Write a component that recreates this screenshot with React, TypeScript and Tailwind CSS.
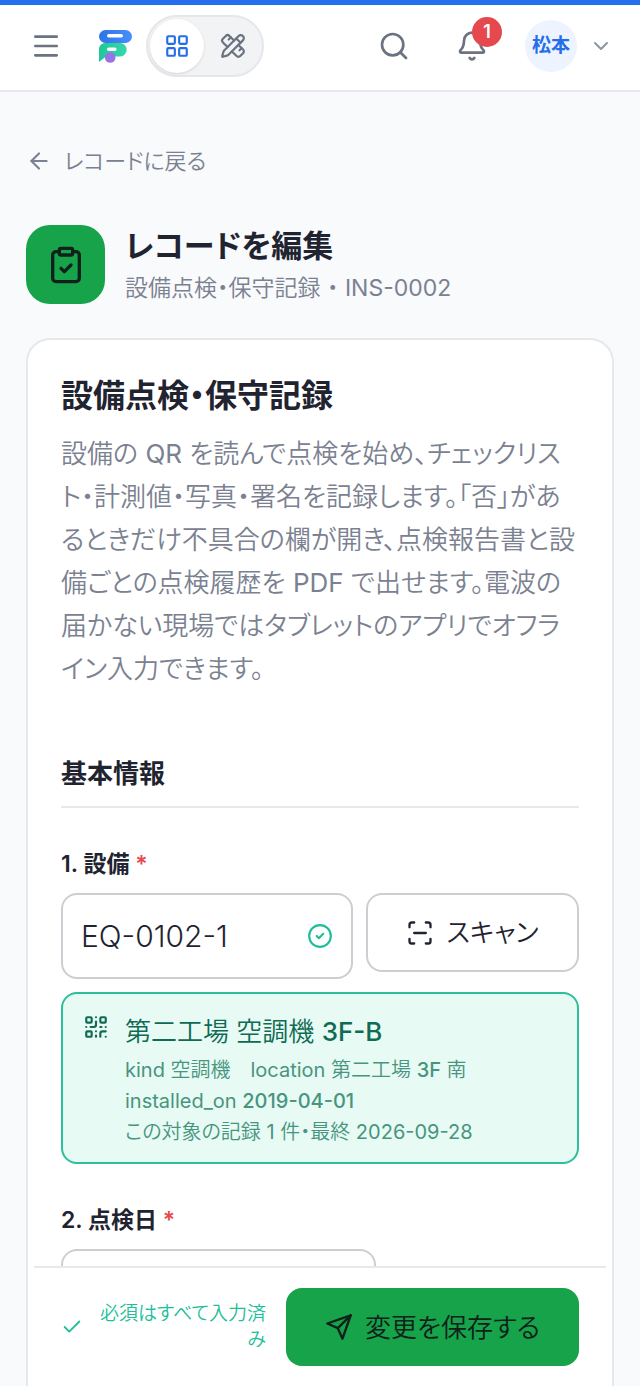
import { useState } from 'react';
import {
  ArrowLeft,
  Bell,
  Check,
  ChevronDown,
  CircleCheck,
  ClipboardCheck,
  LayoutGrid,
  Menu,
  PencilRuler,
  QrCode,
  ScanLine,
  Search,
} from 'lucide-react';

const lightText = "font-['Inter','Noto_Sans_CJK_JP_DemiLight','Noto_Sans_CJK_JP',sans-serif]";

function Logo() {
  return (
    <svg viewBox="0 0 34 34" className="w-[34px] h-[34px]" aria-hidden="true">
      <defs>
        <linearGradient id="logo-blue" x1="0" x2="1">
          <stop offset="0" stopColor="#2f73e8" />
          <stop offset="1" stopColor="#4590fa" />
        </linearGradient>
        <linearGradient id="logo-green" x1="0" x2="1">
          <stop offset="0" stopColor="#1fc898" />
          <stop offset="1" stopColor="#3ad6ac" />
        </linearGradient>
      </defs>
      <path d="M1 33V20a6 6 0 0 1 6-6h15a6.700 6.700 0 0 1 0 13.500H8z" fill="url(#logo-green)" />
      <rect x="1" y="1" width="33" height="13" rx="6.500" fill="url(#logo-blue)" />
      <rect x="9" y="5" width="16" height="3.500" rx="1.700" fill="#fff" />
      <rect x="9" y="18.500" width="9.500" height="3.500" rx="1.700" fill="#fff" />
      <circle cx="12.200" cy="28.500" r="5.300" fill="#9873ea" />
    </svg>
  );
}

function SendIcon() {
  return (
    <svg
      viewBox="0 0 24 24"
      fill="none"
      stroke="currentColor"
      strokeWidth="2"
      strokeLinecap="round"
      strokeLinejoin="round"
      className="w-7 h-7"
      aria-hidden="true"
    >
      <path d="m22 2-7 20-4-9-9-4Z" />
      <path d="M22 2 11 13" />
    </svg>
  );
}

function Header() {
  const [mode, setMode] = useState<'use' | 'design'>('use');

  return (
    <header className="flex items-center border-t-[5px] border-t-[#256eeb] border-b-2 border-b-[#e6e8eb] bg-white h-[92px] pb-[3px] pl-[30px] pr-[27px] text-[#6b7280]">
      <button type="button" aria-label="メニュー" className="shrink-0">
        <Menu className="w-8 h-8" />
      </button>
      <a href="#" aria-label="ホーム" className="ml-9 shrink-0">
        <Logo />
      </a>
      <div className="ml-[14px] flex shrink-0 items-center gap-[2px] rounded-full border-2 border-[#e5e7eb] bg-[#f1f3f5] p-[2px]">
        <button
          type="button"
          aria-label="アプリ"
          onClick={() => setMode('use')}
          className={`flex h-[54px] w-[54px] items-center justify-center rounded-full ${mode === 'use' ? 'bg-white text-[#256eeb] shadow' : ''}`}
        >
          <LayoutGrid className="w-[26px] h-[26px]" />
        </button>
        <button
          type="button"
          aria-label="デザイン"
          onClick={() => setMode('design')}
          className={`flex h-[54px] w-[54px] items-center justify-center rounded-full ${mode === 'design' ? 'bg-white text-[#256eeb] shadow' : ''}`}
        >
          <PencilRuler className="w-[26px] h-[26px]" />
        </button>
      </div>
      <div className="ml-auto flex shrink-0 items-center">
        <button type="button" aria-label="検索">
          <Search className="w-8 h-8" />
        </button>
        <button type="button" aria-label="通知" className="relative ml-[46px]">
          <Bell className="w-8 h-8" />
          <span className="absolute -top-[13px] left-4 flex h-[30px] w-[30px] items-center justify-center rounded-full bg-[#e5484d] text-lg font-semibold text-white">
            1
          </span>
        </button>
        <button type="button" aria-label="アカウント" className="ml-[37px] flex items-center gap-3">
          <span className="flex h-[52px] w-[52px] items-center justify-center rounded-full bg-[#edf4ff] text-[19px] font-semibold text-[#256eeb]">
            松本
          </span>
          <ChevronDown className="w-6 h-6 text-[#9096a0]" />
        </button>
      </div>
    </header>
  );
}

function FieldLabel({ htmlFor, children }: { htmlFor: string; children: string }) {
  return (
    <label htmlFor={htmlFor} className="block text-[23px] leading-8 font-semibold text-[#1f2430]">
      {children} <span className="text-[#e5484d]">*</span>
    </label>
  );
}

function EquipmentCard() {
  return (
    <div className={`mt-[13px] flex gap-4 rounded-2xl border-2 border-[#2bbf9b] bg-[#e7faf4] px-5 pt-5 pb-[14px] text-[#0f6b53] ${lightText}`}>
      <QrCode className="w-[26px] h-[26px] shrink-0" />
      <div>
        <p className="text-[26px] leading-9">
          第二工場 空調機 <span className="font-medium">3F-B</span>
        </p>
        <div className="mt-[5px] text-xl leading-[31px] text-[#47957f]">
          <p>
            kind 空調機　location 第二工場 <span className="font-medium">3F</span> 南
          </p>
          <p>
            installed_on <span className="font-medium">2019-04-01</span>
          </p>
          <p>この対象の記録 1 件・最終 2026-09-28</p>
        </div>
      </div>
    </div>
  );
}

export default function App() {
  const [equipment, setEquipment] = useState('EQ-0102-1');
  const [date, setDate] = useState('');

  return (
    <div className="h-screen overflow-hidden flex flex-col bg-[#f8fafc] font-['Inter','Noto_Sans_CJK_JP',sans-serif] [font-feature-settings:'palt']">
      <Header />
      <main className="flex-1 min-h-0 flex flex-col px-[26px] pt-[53px]">
        <a href="#" className={`flex items-center gap-3 self-start text-[22px] leading-8 text-[#7b8190] ${lightText}`}>
          <ArrowLeft className="w-[26px] h-[26px]" />
          レコードに戻る
        </a>

        <div className="mt-12 flex items-center gap-5">
          <div className="flex h-[79px] w-[79px] shrink-0 items-center justify-center rounded-3xl bg-[#16a34a] text-[#10201a]">
            <ClipboardCheck className="w-10 h-10" />
          </div>
          <div>
            <h1 className="text-[31px] leading-10 font-bold text-[#1f2430]">レコードを編集</h1>
            <p className={`mt-[6px] text-[23px] leading-8 text-[#7b8190] ${lightText}`}>設備点検・保守記録 ・ INS-0002</p>
          </div>
        </div>

        {/* Form card */}
        <form
          onSubmit={(e) => e.preventDefault()}
          className="mt-[34px] flex-1 min-h-0 flex flex-col rounded-t-3xl border-2 border-b-0 border-[#e6e8eb] bg-white"
        >
          <div className="flex-1 min-h-0 overflow-hidden px-[33px] pt-[33px]">
            <h2 className="text-[32px] leading-[46px] font-bold text-[#1f2430]">設備点検・保守記録</h2>
            <p className={`mt-[13px] text-[26px] leading-[43px] text-[#7b8190] ${lightText}`}>
              設備の QR を読んで点検を始め、チェックリスト・計測値・写真・署名を記録します。「否」があるときだけ不具合の欄が開き、点検報告書と設備ごとの点検履歴を PDF で出せます。電波の届かない現場ではタブレットのアプリでオフライン入力できます。
            </p>

            <h3 className="mt-[66px] border-b-2 border-[#e6e8eb] pb-[14px] text-[26px] leading-9 font-semibold text-[#1f2430]">
              基本情報
            </h3>

            <div className="mt-10">
              <FieldLabel htmlFor="equipment">1. 設備</FieldLabel>
              <div className="mt-[13px] flex items-start gap-[13px]">
                <div className="flex h-[86px] min-w-0 flex-1 items-center rounded-2xl border-2 border-[#cbced2] px-[18px]">
                  <input
                    id="equipment"
                    value={equipment}
                    onChange={(e) => setEquipment(e.target.value)}
                    className="min-w-0 flex-1 bg-transparent text-[30px] font-light text-[#1f2430] outline-none"
                  />
                  <CircleCheck className="w-[26px] h-[26px] shrink-0 text-[#20bf98]" />
                </div>
                <button
                  type="button"
                  className={`flex h-[79px] w-[213px] items-center justify-center gap-3 rounded-2xl border-2 border-[#cbced2] text-[26px] text-[#1f2430] ${lightText}`}
                >
                  <ScanLine className="w-7 h-7" />
                  スキャン
                </button>
              </div>
              <EquipmentCard />
            </div>

            <div className="mt-10">
              <FieldLabel htmlFor="date">2. 点検日</FieldLabel>
              <input
                id="date"
                value={date}
                onChange={(e) => setDate(e.target.value)}
                className="mt-[13px] h-[86px] w-[315px] rounded-2xl border-2 border-[#cbced2] px-[18px] text-[30px] font-light outline-none"
              />
            </div>
          </div>

          {/* Save bar */}
          <div className={`mx-[6px] flex items-center gap-5 border-t-2 border-[#e6e8eb] px-[27px] py-5 ${lightText}`}>
            <div className="flex min-w-0 flex-1 items-center gap-2 text-[19px] leading-[26px] text-[#20bf98]">
              <Check className="w-[22px] h-[22px] shrink-0" />
              <p className="text-right">必須はすべて入力済み</p>
            </div>
            <button
              type="submit"
              className="flex h-[78px] w-[293px] shrink-0 items-center justify-center gap-3 rounded-2xl bg-[#16a34a] text-[26px] text-[#10201a]"
            >
              <SendIcon />
              変更を保存する
            </button>
          </div>
        </form>
      </main>
    </div>
  );
}
